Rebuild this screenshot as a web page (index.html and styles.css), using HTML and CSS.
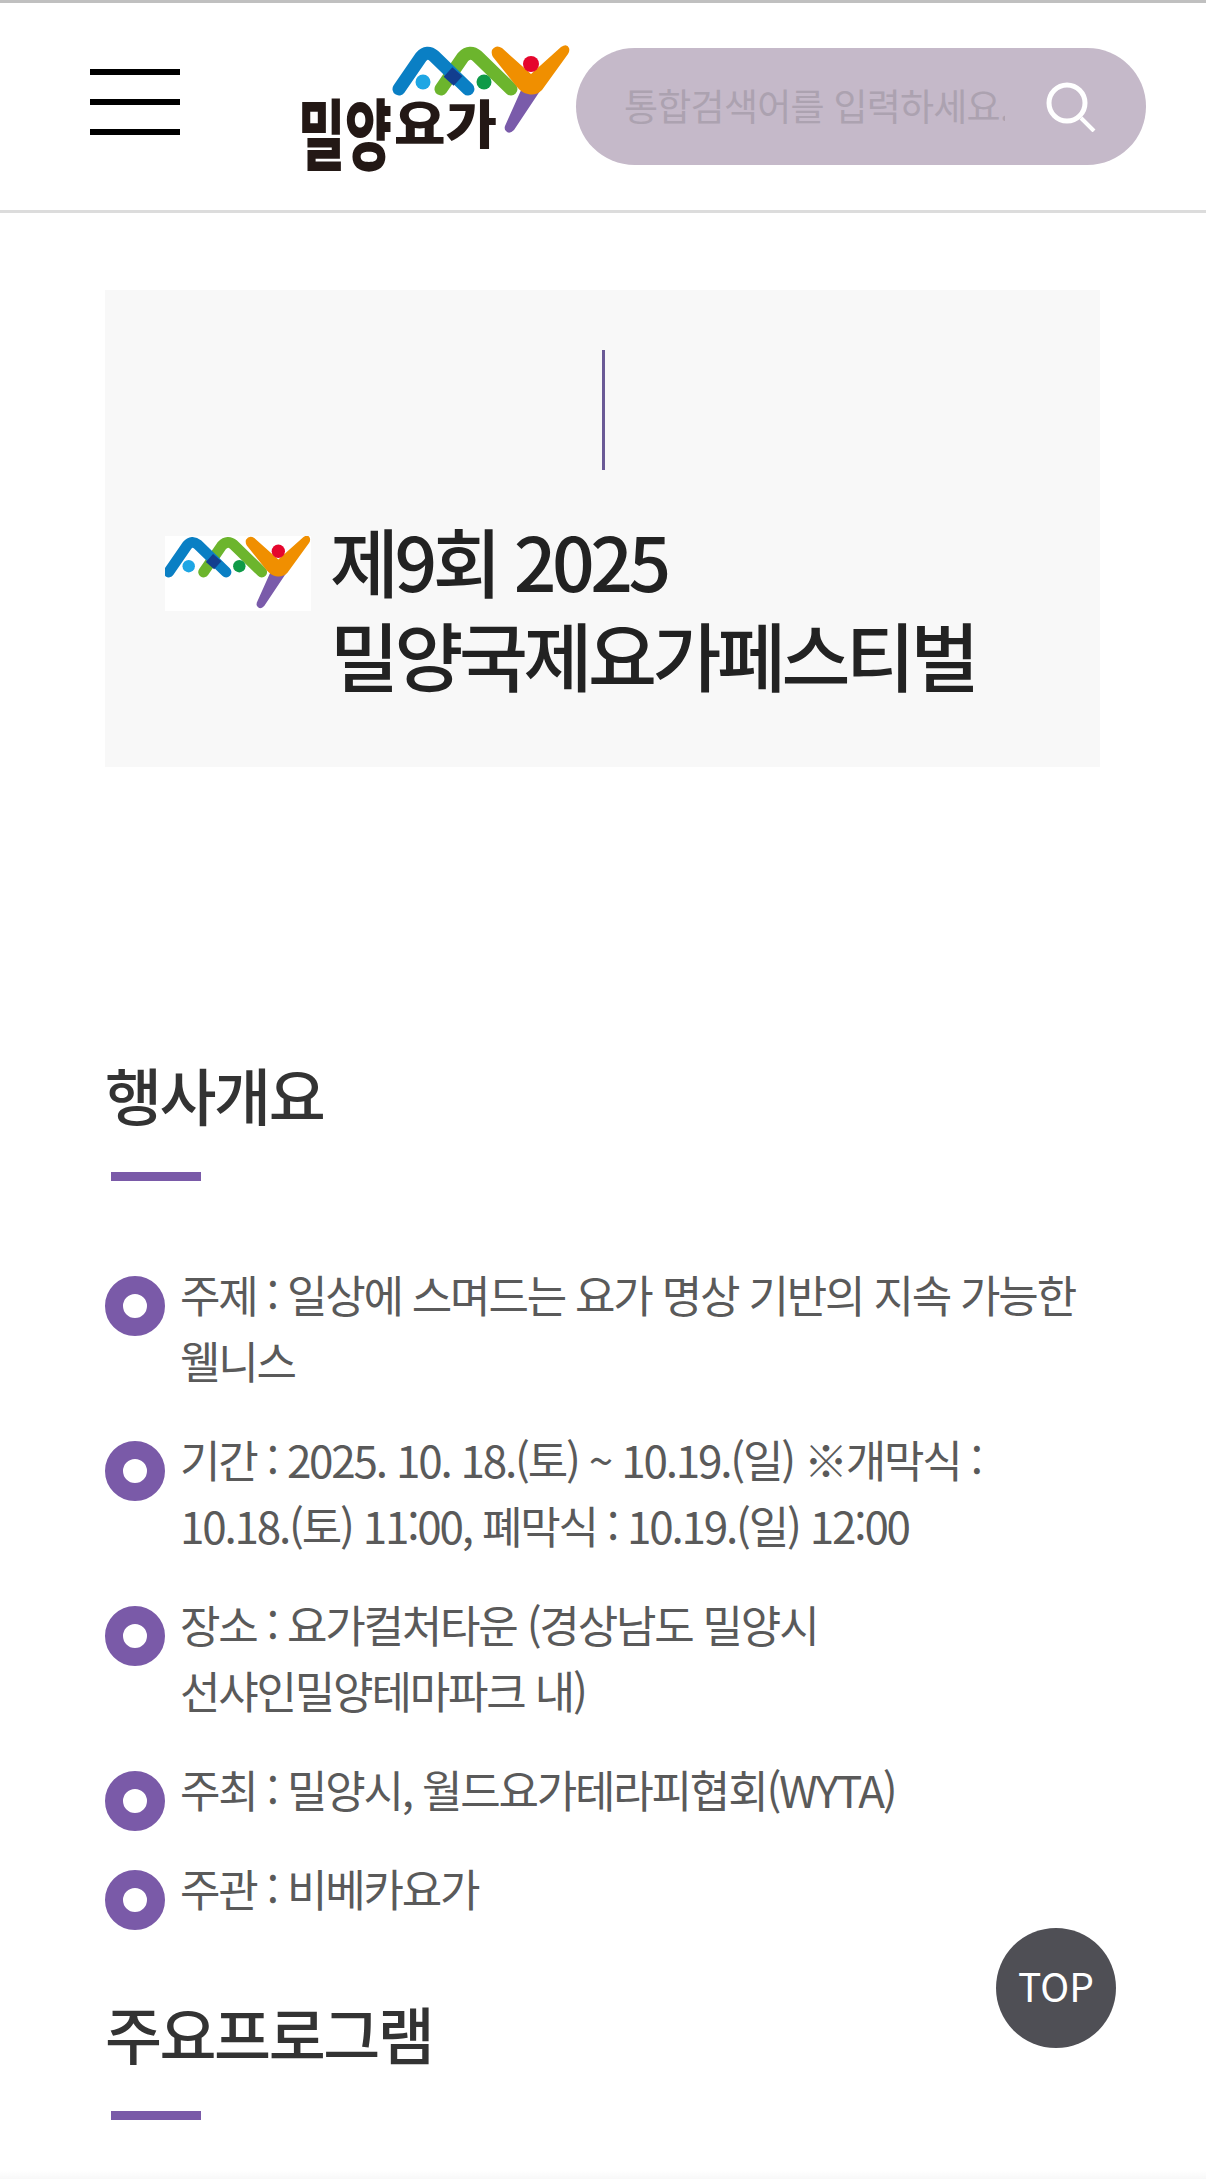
FILE: index.html
```html
<!DOCTYPE html>
<html lang="ko">
<head>
<meta charset="utf-8">
<title>제9회 2025 밀양국제요가페스티벌</title>
<link rel="stylesheet" href="styles.css">
</head>
<body>
<svg class="defs" width="0" height="0" aria-hidden="true">
  <defs>
    <symbol id="mark" viewBox="110 12 180 94">
      <path class="arm arm-green" d="M161 59 L183 27 Q190 20 197 26 L231 59"/>
      <path class="arm arm-blue" d="M119 59 L141 27 Q147 20 154 26 L188 59"/>
      <path class="arm arm-dark" d="M168 42 L178 51"/>
      <circle cx="143" cy="52" r="7.5" fill="#1ea6e4"/>
      <circle cx="204" cy="52" r="7.5" fill="#0f9a48"/>
      <path fill="#7a5baa" d="M242 58 L262 58 L234 100 Q229 105 226 101 Q224 99 225 96 Z"/>
      <path fill="#f08f00" d="M212 20 Q216 14 222 18 L251 44 L281 17 Q287 13 289 18 Q290 21 288 24 L262 60 Q256 66 248 64 Q242 63 237 57 L213 27 Q211 24 212 20 Z"/>
      <circle cx="251" cy="34" r="8" fill="#e5062d"/>
    </symbol>
  </defs>
</svg>

<header class="site-header">
  <button class="menu-btn" aria-label="메뉴"><span></span><span></span><span></span></button>
  <a class="logo" href="#">
    <svg class="logo-svg" viewBox="0 0 296 150">
      <use href="#mark" x="110" y="12" width="180" height="94"/>
      <text class="logo-text logo-tall" x="18" y="134" textLength="94" lengthAdjust="spacingAndGlyphs">밀양</text>
      <text class="logo-text logo-short" x="114" y="114" textLength="103" lengthAdjust="spacingAndGlyphs">요가</text>
    </svg>
  </a>
  <form class="search">
    <input class="search-input" type="text" placeholder="통합검색어를 입력하세요.">
    <svg class="search-icon" viewBox="0 0 50 50">
      <circle cx="21" cy="21" r="18" fill="none" stroke="#fff" stroke-width="5"/>
      <path d="M35 36 L48 49" fill="none" stroke="#fff" stroke-width="4"/>
    </svg>
  </form>
</header>

<main class="content">
  <section class="hero">
    <div class="hero-line"></div>
    <div class="hero-title-row">
      <svg class="hero-logo" viewBox="0 0 146 75"><use href="#mark" x="-4" y="-3" width="150" height="78"/></svg>
      <h1 class="hero-title">제9회 2025<br>밀양국제요가페스티벌</h1>
    </div>
  </section>

  <section class="overview">
    <h2 class="sec-title">행사개요</h2>
    <div class="sec-bar"></div>
    <ul class="info-list">
      <li>주제 : 일상에 스며드는 요가 명상 기반의 지속 가능한 웰니스</li>
      <li>기간 : 2025. 10. 18.(토) ~ 10.19.(일) ※개막식 : <span class="nowrap">10.18.(토)</span> 11:00, 폐막식 : 10.19.(일) 12:00</li>
      <li>장소 : 요가컬처타운 (경상남도 밀양시 선샤인밀양테마파크 내)</li>
      <li>주최 : 밀양시, 월드요가테라피협회(WYTA)</li>
      <li>주관 : 비베카요가</li>
    </ul>
  </section>

  <section class="programs">
    <h2 class="sec-title">주요프로그램</h2>
    <div class="sec-bar"></div>
  </section>
</main>

<a class="top-btn" href="#">TOP</a>
<div class="bottom-fade"></div>
</body>
</html>
```

FILE: styles.css
```css
*, *::before, *::after { box-sizing: border-box; }
html, body { margin: 0; padding: 0; }
body {
  height: 2179px;
  overflow: hidden;
  background: #fff;
  font-family: "Noto Sans CJK KR", "Noto Sans", sans-serif;
  color: #333;
}
.defs { position: absolute; }

.arm { fill: none; stroke-width: 13; stroke-linecap: round; stroke-linejoin: round; }
.arm-blue { stroke: #0a7fc4; }
.arm-green { stroke: #6cb52d; }
.arm-dark { stroke: #123e8f; stroke-linecap: butt; }

.site-header {
  display: flex;
  align-items: flex-start;
  height: 213px;
  border-top: 3px solid #c0c0c0;
  border-bottom: 3px solid #dcdcdc;
}
.menu-btn {
  display: flex;
  flex-direction: column;
  gap: 24px;
  width: 90px;
  margin: 66px 0 0 90px;
  padding: 0;
  border: 0;
  background: none;
}
.menu-btn span { display: block; height: 6px; background: #000; }
.logo { display: block; width: 296px; height: 150px; margin: 27px 0 0 100px; }
.logo-svg { display: block; width: 296px; height: 150px; overflow: visible; }
.logo-text {
  font-family: "Noto Sans CJK KR", sans-serif;
  font-weight: 900;
  fill: #231815;
}
.logo-tall { font-size: 77px; }
.logo-short { font-size: 52px; }
.search {
  display: flex;
  align-items: center;
  width: 570px;
  height: 117px;
  margin-top: 45px;
  padding: 0 50px 0 48px;
  border-radius: 58.5px;
  background: #c5b9c9;
}
.search-input {
  flex: 1;
  min-width: 0;
  margin-bottom: 4px;
  padding: 0;
  border: 0;
  outline: 0;
  background: none;
  font-family: inherit;
  font-size: 37px;
  letter-spacing: -0.02em;
  color: #555;
}
.search-input::placeholder { color: #aca2b0; opacity: 1; }
.search-icon { display: block; width: 50px; height: 50px; margin-left: 41px; flex: none; }

.content { padding: 0 105px; }

.hero {
  width: 995px;
  height: 477px;
  margin-top: 77px;
  padding-top: 60px;
  background: #f8f8f8;
}
.hero-line { width: 3px; height: 120px; margin-left: 497px; background: #6a5a96; }
.hero-title-row { display: flex; align-items: flex-start; margin-top: 43px; padding-left: 60px; }
.hero-logo { display: block; width: 146px; height: 75px; margin-top: 23px; flex: none; background: #fff; }
.hero-title {
  margin: 0 0 0 19px;
  font-size: 75px;
  font-weight: 500;
  line-height: 94px;
  letter-spacing: -0.06em;
  color: #222;
}

.overview { margin-top: 283px; }
.sec-title {
  margin: 0;
  font-size: 62px;
  font-weight: 500;
  line-height: 88px;
  letter-spacing: -0.04em;
  color: #333;
}
.sec-bar { width: 90px; height: 9px; margin: 34px 0 0 6px; background: #7a5aa8; }

.info-list { margin: 80px 0 0; padding: 0; list-style: none; }
.info-list li {
  position: relative;
  margin-bottom: 33px;
  padding-left: 75px;
  font-size: 44px;
  line-height: 66px;
  letter-spacing: -0.05em;
  word-break: keep-all;
  color: #5a5a5a;
}
.nowrap { white-space: nowrap; }
.info-list li::before {
  content: "";
  position: absolute;
  left: 0;
  top: 15px;
  width: 60px;
  height: 60px;
  border: 18px solid #7a5aa8;
  border-radius: 50%;
  background: #fff;
}

.programs { margin-top: 68px; }

.top-btn {
  position: fixed;
  left: 996px;
  top: 1928px;
  display: flex;
  align-items: center;
  justify-content: center;
  width: 120px;
  height: 120px;
  padding-bottom: 6px;
  border-radius: 50%;
  background: #4f4f55;
  color: #fff;
  font-size: 39px;
  text-decoration: none;
}

.bottom-fade {
  position: fixed;
  left: 0;
  right: 0;
  bottom: 0;
  height: 8px;
  background: linear-gradient(#fff, #f8f8f8);
}
```
